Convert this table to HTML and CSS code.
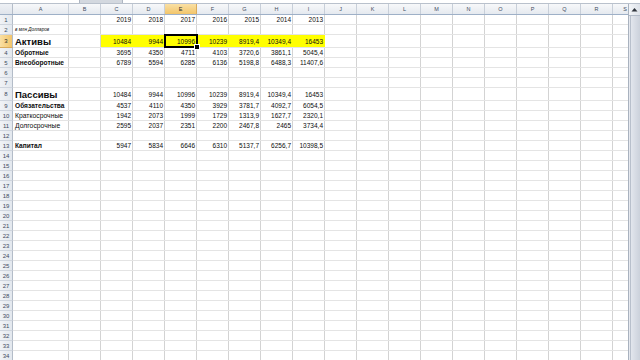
FILE: index.html
```html
<!DOCTYPE html>
<html lang="ru">
<head>
<meta charset="utf-8">
<title>Баланс</title>
<link rel="stylesheet" href="styles.css">
</head>
<body>
<div class="app">
  <div class="fbar"><div class="namebox"></div><div class="fx"></div><div class="field"></div></div>
  <div class="main">
    <div class="sheet">
      <div class="hdr">
        <div class="hc corner"></div>
        <div class="hc">A</div><div class="hc">B</div><div class="hc">C</div><div class="hc">D</div>
        <div class="hc on">E</div><div class="hc">F</div><div class="hc">G</div><div class="hc">H</div>
        <div class="hc">I</div><div class="hc">J</div><div class="hc">K</div><div class="hc">L</div>
        <div class="hc">M</div><div class="hc">N</div><div class="hc">O</div><div class="hc">P</div>
        <div class="hc">Q</div><div class="hc">R</div><div class="hc last">S</div>
      </div>

      <div class="row"><div class="rh">1</div><div class="cells">
        <span class="c cC">2019</span><span class="c cD">2018</span><span class="c cE">2017</span><span class="c cF">2016</span><span class="c cG">2015</span><span class="c cH">2014</span><span class="c cI">2013</span>
      </div></div>

      <div class="row"><div class="rh">2</div><div class="cells">
        <span class="c cA note">в млн Долларов</span>
      </div></div>

      <div class="row tall"><div class="rh on">3</div><div class="cells">
        <span class="c cA big">Активы</span>
        <span class="c cC y">10484</span><span class="c cD y">9944</span><span class="c cE y sel">10996</span><span class="c cF y">10239</span><span class="c cG y">8919,4</span><span class="c cH y">10349,4</span><span class="c cI y">16453</span>
      </div></div>

      <div class="row"><div class="rh">4</div><div class="cells">
        <span class="c cA bold">Обротные</span>
        <span class="c cC">3695</span><span class="c cD">4350</span><span class="c cE">4711</span><span class="c cF">4103</span><span class="c cG">3720,6</span><span class="c cH">3861,1</span><span class="c cI">5045,4</span>
      </div></div>

      <div class="row"><div class="rh">5</div><div class="cells">
        <span class="c cA bold">Внеоборотные</span>
        <span class="c cC">6789</span><span class="c cD">5594</span><span class="c cE">6285</span><span class="c cF">6136</span><span class="c cG">5198,8</span><span class="c cH">6488,3</span><span class="c cI">11407,6</span>
      </div></div>

      <div class="row"><div class="rh">6</div><div class="cells"></div></div>
      <div class="row"><div class="rh">7</div><div class="cells"></div></div>

      <div class="row tall"><div class="rh">8</div><div class="cells">
        <span class="c cA big">Пассивы</span>
        <span class="c cC">10484</span><span class="c cD">9944</span><span class="c cE">10996</span><span class="c cF">10239</span><span class="c cG">8919,4</span><span class="c cH">10349,4</span><span class="c cI">16453</span>
      </div></div>

      <div class="row"><div class="rh">9</div><div class="cells">
        <span class="c cA bold">Обязательства</span>
        <span class="c cC">4537</span><span class="c cD">4110</span><span class="c cE">4350</span><span class="c cF">3929</span><span class="c cG">3781,7</span><span class="c cH">4092,7</span><span class="c cI">6054,5</span>
      </div></div>

      <div class="row"><div class="rh">10</div><div class="cells">
        <span class="c cA">Краткосрочные</span>
        <span class="c cC">1942</span><span class="c cD">2073</span><span class="c cE">1999</span><span class="c cF">1729</span><span class="c cG">1313,9</span><span class="c cH">1627,7</span><span class="c cI">2320,1</span>
      </div></div>

      <div class="row"><div class="rh">11</div><div class="cells">
        <span class="c cA">Долгосрочные</span>
        <span class="c cC">2595</span><span class="c cD">2037</span><span class="c cE">2351</span><span class="c cF">2200</span><span class="c cG">2467,8</span><span class="c cH">2465</span><span class="c cI">3734,4</span>
      </div></div>

      <div class="row"><div class="rh">12</div><div class="cells"></div></div>

      <div class="row"><div class="rh">13</div><div class="cells">
        <span class="c cA bold">Капитал</span>
        <span class="c cC">5947</span><span class="c cD">5834</span><span class="c cE">6646</span><span class="c cF">6310</span><span class="c cG">5137,7</span><span class="c cH">6256,7</span><span class="c cI">10398,5</span>
      </div></div>

      <div class="row"><div class="rh">14</div><div class="cells"></div></div>
      <div class="row"><div class="rh">15</div><div class="cells"></div></div>
      <div class="row"><div class="rh">16</div><div class="cells"></div></div>
      <div class="row"><div class="rh">17</div><div class="cells"></div></div>
      <div class="row"><div class="rh">18</div><div class="cells"></div></div>
      <div class="row"><div class="rh">19</div><div class="cells"></div></div>
      <div class="row"><div class="rh">20</div><div class="cells"></div></div>
      <div class="row"><div class="rh">21</div><div class="cells"></div></div>
      <div class="row"><div class="rh">22</div><div class="cells"></div></div>
      <div class="row"><div class="rh">23</div><div class="cells"></div></div>
      <div class="row"><div class="rh">24</div><div class="cells"></div></div>
      <div class="row"><div class="rh">25</div><div class="cells"></div></div>
      <div class="row"><div class="rh">26</div><div class="cells"></div></div>
      <div class="row"><div class="rh">27</div><div class="cells"></div></div>
      <div class="row"><div class="rh">28</div><div class="cells"></div></div>
      <div class="row"><div class="rh">29</div><div class="cells"></div></div>
      <div class="row"><div class="rh">30</div><div class="cells"></div></div>
      <div class="row"><div class="rh">31</div><div class="cells"></div></div>
      <div class="row"><div class="rh">32</div><div class="cells"></div></div>
      <div class="row"><div class="rh">33</div><div class="cells"></div></div>
      <div class="row"><div class="rh">34</div><div class="cells"></div></div>
    </div>
    <div class="vscroll">
      <div class="up"><svg width="7" height="5" viewBox="0 0 7 5"><path d="M0.5 4.5 L3.5 1 L6.5 4.5 Z" fill="#30353d"/></svg></div>
      <div class="thumb"></div>
    </div>
  </div>
</div>
</body>
</html>
```

FILE: styles.css
```css
* { box-sizing: border-box; margin: 0; padding: 0; }
html, body { width: 640px; height: 360px; overflow: hidden; background: #fff; }
body { font-family: "Liberation Sans", Arial, sans-serif; color: #0d0d0d; }

.app { display: flex; flex-direction: column; height: 360px; }

.fbar { height: 4px; flex: none; display: flex; background: #dde2e8; border-bottom: 1px solid #b9c1cc; }
.namebox { width: 80px; background: #fff; border-right: 1px solid #aeb6c2; }
.fx { width: 42px; background: #d3d8df; }
.field { flex: 1; background: #fff; border-left: 1px solid #aeb6c2; }

.main { flex: 1; display: flex; min-height: 0; }
.sheet { width: 628px; flex: none; overflow: hidden; }

.hdr {
  display: grid;
  grid-template-columns: 13px 56px repeat(17, 32px) 15px;
  height: 11px;
  border-bottom: 1px solid #9eb0c7;
}
.hc {
  display: flex; align-items: center; justify-content: center;
  font-size: 5.5px; color: #3e4b5e;
  background: linear-gradient(#f7f8fa, #e5e9ef);
  border-right: 1px solid #c8cfd9;
}
.hc.last { justify-content: flex-end; padding-right: 1px; border-right: 0; }
.hc.corner { background: linear-gradient(#eef1f5, #dfe4eb); border-right-color: #b5bdc9; }
.hc.on { background: linear-gradient(#fae0a4, #f2c56b); color: #2b2b2b; border-right-color: #d9ab5c; }

.row { display: flex; height: 10px; }
.row.tall { height: 13px; }

.rh {
  width: 13px; flex: none;
  display: flex; align-items: center; justify-content: center;
  font-size: 6px; color: #3e4b5e;
  background: linear-gradient(90deg, #f1f3f6, #e3e8ee);
  border-right: 1px solid #b3bcc8;
  border-bottom: 1px solid #cfd5de;
}
.rh.on { background: linear-gradient(90deg, #fae0a4, #f2c56b); color: #2b2b2b; border-bottom-color: #d9ab5c; }

.cells {
  flex: 1;
  display: grid;
  grid-template-columns: 56px repeat(18, 32px);
  grid-template-rows: 1fr;
  border-bottom: 1px solid #e4e4e4;
  background:
    linear-gradient(#d3d3d3, #d3d3d3) 55px 0 / 1px 100% no-repeat,
    repeating-linear-gradient(90deg, transparent 0 31px, #d3d3d3 31px 32px) 56px 0 / 600px 100% no-repeat;
}

.c {
  grid-row: 1;
  display: flex; align-items: center; justify-content: flex-end;
  padding-right: 2px;
  font-size: 6.5px;
  white-space: nowrap;
  min-width: 0;
}
.cA { grid-column: 1; justify-content: flex-start; padding-left: 2px; padding-right: 0; font-size: 6.8px; }
.cC { grid-column: 3; }
.cD { grid-column: 4; }
.cE { grid-column: 5; }
.cF { grid-column: 6; }
.cG { grid-column: 7; }
.cH { grid-column: 8; }
.cI { grid-column: 9; }

.bold { font-weight: bold; font-size: 6.6px; }
.big { font-weight: bold; font-size: 9.5px; }
.note { font-style: italic; font-size: 4.6px; }

.y { background: #ffff00; }
.sel { position: relative; z-index: 1; outline: 2px solid #000; outline-offset: -1px; }
.sel::after {
  content: ""; position: absolute; right: -3px; bottom: -3px;
  width: 4px; height: 4px; background: #000; border: 1px solid #fff;
}

.vscroll {
  flex: 1; display: flex; flex-direction: column;
  border-left: 1px solid #a9b2bf;
  background: #e6e9ef;
}
.up {
  height: 12px; flex: none;
  display: flex; align-items: center; justify-content: center;
  background: linear-gradient(90deg, #f3f5f8, #dde2e9);
  border-bottom: 1px solid #b3bcc9;
}
.thumb {
  flex: 1; margin: 0 0 0 1px;
  background: linear-gradient(90deg, #e2e6ed, #cbd1db);
  border-left: 1px solid #b8c0cc;
}
```
